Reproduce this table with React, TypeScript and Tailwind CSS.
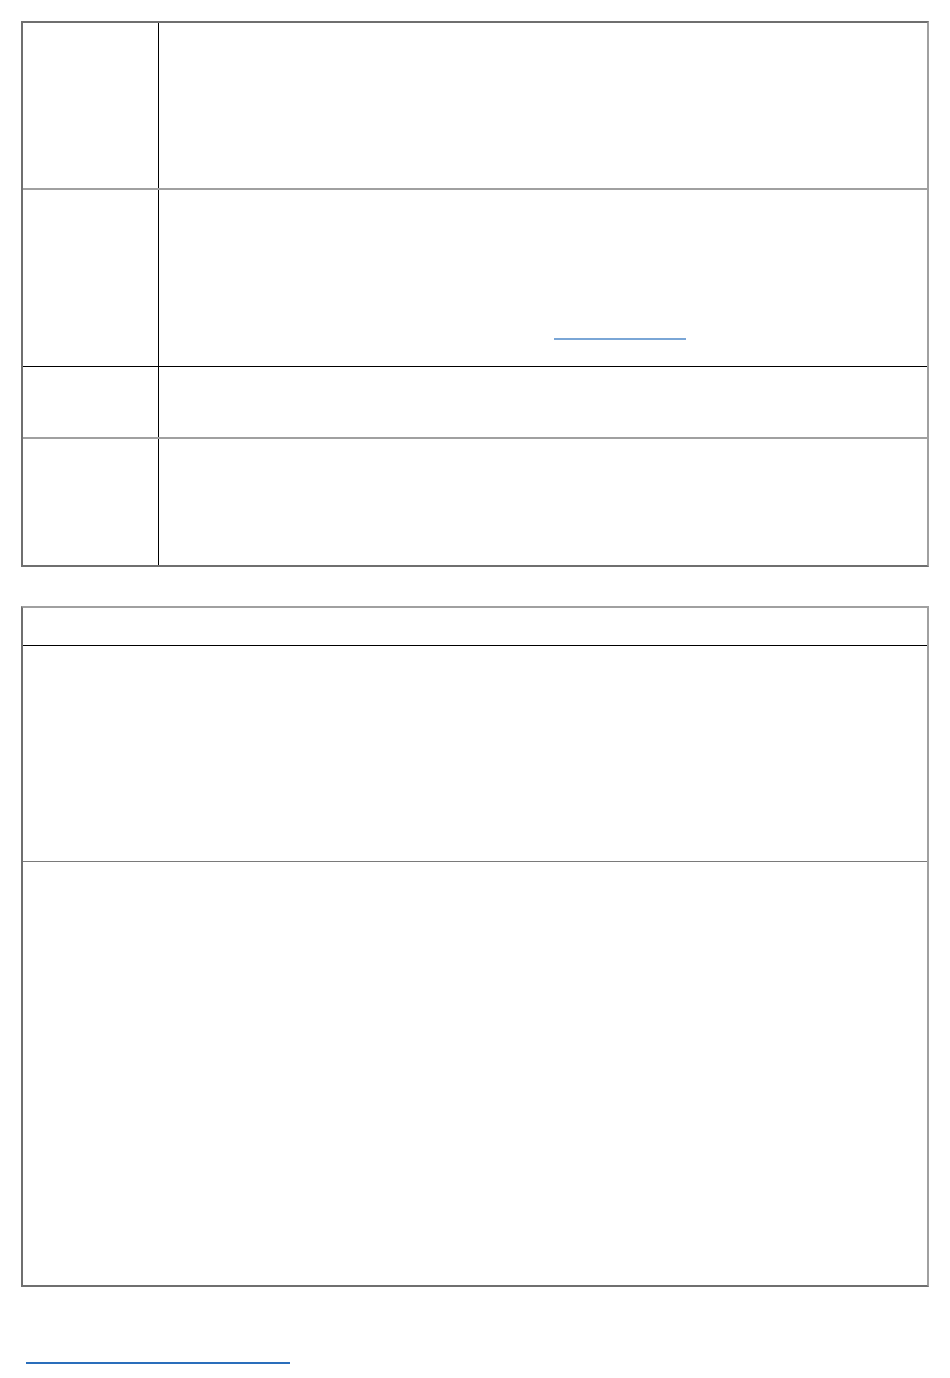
const Link = ({ w, color }: { w: string; color: string }) => (
  <div className={`h-[2px] ${w} ${color}`} />
);

const App = () => {
  return (
    <div className="min-h-screen bg-white font-['Liberation_Sans',sans-serif] text-black">
      <div className="px-[21px] pt-[21px]">
        {/* first table */}
        <div className="w-[908px] border-t-2 border-l-2 border-r-2 border-b-2 border-t-[#6f6f6f] border-l-[#6f6f6f] border-r-[#a0a0a0] border-b-[#6f6f6f]">
          <div className="flex h-[167px] border-b-2 border-b-[#a0a0a0]">
            <div className="w-[136px] border-r border-r-black" />
            <div className="flex-1" />
          </div>
          <div className="flex h-[177px] border-b border-b-black">
            <div className="w-[136px] border-r border-r-black" />
            <div className="flex-1 pl-[395px] pt-[148px]">
              <Link w="w-[132px]" color="bg-[#7aa6d6]" />
            </div>
          </div>
          <div className="flex h-[72px] border-b-2 border-b-[#a0a0a0]">
            <div className="w-[136px] border-r border-r-black" />
            <div className="flex-1" />
          </div>
          <div className="flex h-[126px]">
            <div className="w-[136px] border-r border-r-black" />
            <div className="flex-1" />
          </div>
        </div>

        {/* second table */}
        <div className="mt-[39px] w-[908px] border-t-2 border-l-2 border-r-2 border-b-2 border-t-[#a0a0a0] border-l-[#6f6f6f] border-r-[#a0a0a0] border-b-[#6f6f6f]">
          <div className="h-[38px] border-b border-b-black" />
          <div className="h-[216px] border-b border-b-[#7a7a7a]" />
          <div className="h-[423px]" />
        </div>
      </div>

      <div className="pl-[26px] pt-[75px] pb-[14px]">
        <Link w="w-[264px]" color="bg-[#2a6ebb]" />
      </div>
    </div>
  );
};

export default App;
